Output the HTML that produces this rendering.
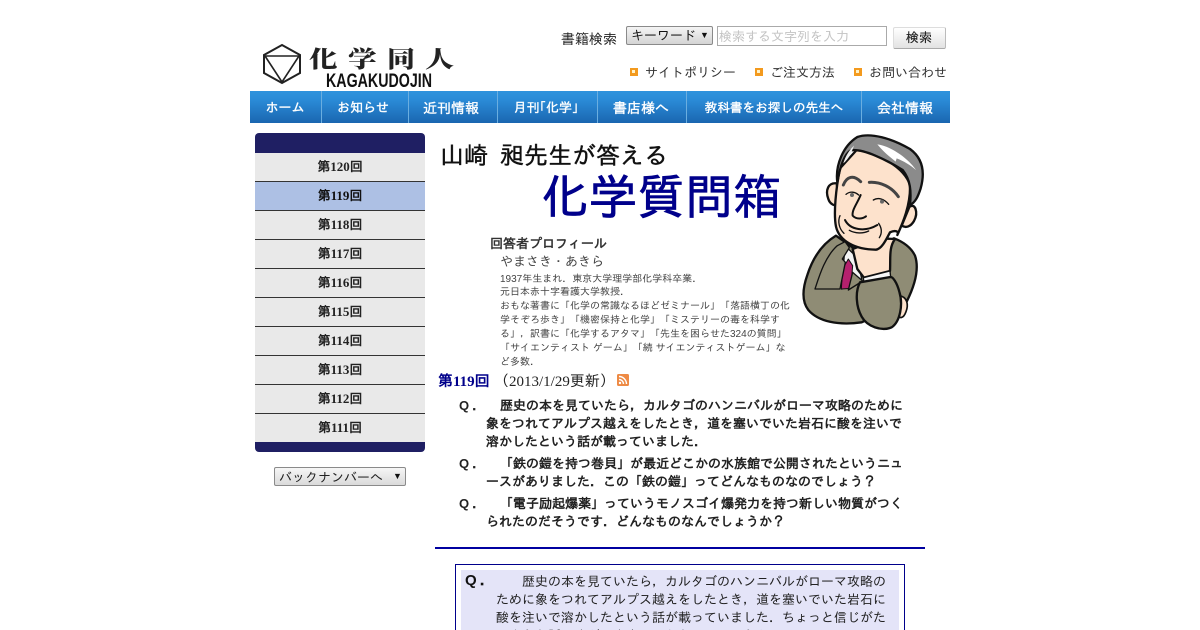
<!DOCTYPE html>
<html lang="ja">
<head>
<meta charset="utf-8">
<title>化学質問箱</title>
<style>
html,body{margin:0;padding:0;background:#fff;width:1200px;height:630px;overflow:hidden;}
#p{position:relative;width:1200px;height:630px;overflow:hidden;font-family:"Liberation Sans","IPAGothic","Noto Sans CJK JP",sans-serif;color:#222;}
.t{position:absolute;white-space:nowrap;line-height:18px;}
.b{position:absolute;}
.nav{position:absolute;left:250px;top:91px;width:700px;height:32px;background:linear-gradient(#2f93dd 0,#2a8ad6 30%,#1a66b0 100%);}
.nav i{position:absolute;top:0;width:1px;height:32px;background:#6aaee0;}
.nav span{position:absolute;top:8px;color:#fff;font-size:14px;line-height:18px;white-space:nowrap;transform:translateX(-50%);-webkit-text-stroke:.35px #fff;}
.side{position:absolute;left:255px;top:153px;width:170px;}
.side div{height:28px;border-bottom:1px solid #333;background:#e9e9e9;text-align:center;font:bold 13px/28px "Liberation Serif","IPAGothic","Noto Sans CJK JP",serif;color:#222;}
.side div:last-child{border-bottom:0;height:29px;}
.side .on{background:#adc0e4;color:#111;}
.ic{position:absolute;top:68px;width:8px;height:8px;background:#f39a1e;}
.ic:after{content:"";position:absolute;left:2px;top:2px;width:3px;height:3px;background:#fff2c8;}
.q{font-size:13px;font-weight:bold;color:#222;}
.q u{text-decoration:none;margin-left:3px;}
.s{font-size:10px;color:#444;line-height:14px;}
.a{font-size:13px;color:#222;}
</style>
</head>
<body>
<div id="p">

<!-- logo -->
<svg class="b" style="left:260px;top:40px" width="200" height="52" viewBox="0 0 200 52">
<g fill="none" stroke="#222" stroke-width="2">
<path d="M22 5 L40 15 L40 33 L22 43 L4 33 L4 15 Z"/>
<path d="M5 16 L39 16 L22 42 Z" stroke-width="1.6"/>
</g>
<g font-family="'Noto Serif CJK SC','IPAGothic',serif" font-weight="900" font-size="28" fill="#222">
<text transform="translate(49,27) scale(1.02,.82)">化</text>
<text transform="translate(88,27) scale(1.02,.82)">学</text>
<text transform="translate(127,27) scale(1,.82)">同</text>
<text transform="translate(165,27) scale(1.04,.82)">人</text>
</g>
<text x="66" y="47" font-family="'Liberation Sans',sans-serif" font-weight="bold" font-size="19" fill="#111" textLength="106" lengthAdjust="spacingAndGlyphs">KAGAKUDOJIN</text>
</svg>

<!-- search -->
<div class="t" style="left:561px;top:30px;font-size:14px;color:#222">書籍検索</div>
<div class="b" style="left:626px;top:26px;width:85px;height:17px;border:1px solid #8a8a8a;border-radius:2px;background:linear-gradient(#f4f4f4,#d4d4d4);"></div>
<div class="t" style="left:631px;top:27px;font-size:13px;color:#111">キーワード</div>
<div class="t" style="left:700px;top:26px;font-size:9px;color:#111">▼</div>
<div class="b" style="left:717px;top:26px;width:168px;height:18px;border:1px solid #aaa;background:#fff;"></div>
<div class="t" style="left:719px;top:28px;font-size:13px;color:#c4c4c4">検索する文字列を入力</div>
<div class="b" style="left:893px;top:27px;width:51px;height:20px;border:1px solid #ddd;border-bottom-color:#aaa;border-right-color:#bbb;border-radius:2px;background:linear-gradient(#fff,#e2e2e2);"></div>
<div class="t" style="left:906px;top:29px;font-size:13px;color:#222;-webkit-text-stroke:.15px #222">検索</div>

<!-- top links -->
<div class="ic" style="left:630px"></div>
<div class="t" style="left:645px;top:64px;font-size:13px;color:#333">サイトポリシー</div>
<div class="ic" style="left:755px"></div>
<div class="t" style="left:770px;top:64px;font-size:13px;color:#333">ご注文方法</div>
<div class="ic" style="left:854px"></div>
<div class="t" style="left:869px;top:64px;font-size:13px;color:#333">お問い合わせ</div>

<!-- nav -->
<div class="nav">
<i style="left:71px"></i><i style="left:158px"></i><i style="left:247px"></i><i style="left:347px"></i><i style="left:436px"></i><i style="left:611px"></i>
<span style="left:35px;font-size:13px">ホーム</span>
<span style="left:113px;font-size:13px">お知らせ</span>
<span style="left:201px">近刊情報</span>
<span style="left:296px;font-size:13px">月刊｢化学｣</span>
<span style="left:391px">書店様へ</span>
<span style="left:524px;font-size:12.6px">教科書をお探しの先生へ</span>
<span style="left:655px">会社情報</span>
</div>

<!-- sidebar -->
<div class="b" style="left:255px;top:133px;width:170px;height:20px;background:#1f1f63;border-radius:4px 4px 0 0;"></div>
<div class="side">
<div>第120回</div>
<div class="on">第119回</div>
<div>第118回</div>
<div>第117回</div>
<div>第116回</div>
<div>第115回</div>
<div>第114回</div>
<div>第113回</div>
<div>第112回</div>
<div>第111回</div>
</div>
<div class="b" style="left:255px;top:442px;width:170px;height:10px;background:#1f1f63;border-radius:0 0 4px 4px;"></div>
<div class="b" style="left:274px;top:467px;width:130px;height:17px;border:1px solid #8a8a8a;border-radius:2px;background:linear-gradient(#f6f6f6,#dadada);"></div>
<div class="t" style="left:279px;top:469px;font-size:13px;color:#222">バックナンバーへ</div>
<div class="t" style="left:393px;top:467px;font-size:9px;color:#111">▼</div>

<!-- title -->
<div class="t" style="left:440px;top:142px;font-size:24px;line-height:30px;color:#111;-webkit-text-stroke:.4px #111">山崎</div>
<div class="t" style="left:500px;top:142px;font-size:24px;line-height:30px;color:#111;-webkit-text-stroke:.4px #111">昶先生が答える</div>
<div class="t" style="left:541px;top:171px;font-size:48px;line-height:56px;color:#00008b;-webkit-text-stroke:.7px #00008b;">化学質問箱</div>

<!-- portrait -->
<svg class="b" style="left:780px;top:125px" width="160" height="215" viewBox="0 0 480 645">
<g stroke="#111" stroke-width="7" stroke-linejoin="round" stroke-linecap="round">
<!-- body -->
<path d="M168 332 C125 358 98 400 82 450 C66 495 66 530 85 555 C115 590 175 602 245 592 L380 530 C405 480 418 430 405 392 C392 365 368 350 342 340 L250 390 Z" fill="#8f8c75"/>
<!-- shirt, tie -->
<path d="M195 362 L232 398 L245 462 L185 492 Z" fill="#f4f4f4" stroke-width="4"/>
<path d="M205 402 L218 422 L212 490 L184 492 L188 432 Z" fill="#b5216e" stroke-width="3"/>
<!-- lapel -->
<path d="M172 362 L195 350 L208 368 L187 402 L196 412 L180 492 L105 492 C118 452 135 395 172 362 Z" fill="#8f8c75" stroke-width="4"/>
<path d="M218 442 L248 468 L205 495 Z" fill="#8f8c75" stroke-width="4"/>
<!-- fingers of lower hand -->
<path d="M358 512 C382 515 386 540 378 560 C370 582 360 580 350 572 Z" fill="#fde2cc" stroke-width="5"/>
<!-- hand/wrist under chin -->
<path d="M218 372 L232 432 L252 458 L330 438 C332 400 326 368 345 342 L300 340 Z" fill="#fde2cc"/>
<path d="M250 458 L330 438 L332 456 L252 476 Z" fill="#f7f7f7" stroke-width="4"/>
<!-- forearm -->
<path d="M240 472 C225 500 228 545 245 575 C262 605 305 620 335 607 C360 590 370 540 358 500 C350 470 338 456 332 456 Z" fill="#8f8c75"/>
<!-- ears -->
<path d="M170 175 C145 172 135 195 145 222 C150 238 165 245 178 240 Z" fill="#fde2cc"/>
<path d="M388 246 C405 232 416 262 402 288 C392 305 378 310 365 302 Z" fill="#fde2cc"/>
<!-- face -->
<path d="M180 130 C168 190 160 265 168 305 C178 348 225 374 288 374 C305 372 318 345 330 322 C345 315 358 318 352 330 C368 295 392 240 390 180 C370 120 280 80 230 75 Z" fill="#fde2cc"/>
<!-- hair -->
<path d="M172 172 C165 120 190 62 232 36 C272 22 335 40 390 72 C428 100 436 140 422 190 C414 215 406 232 390 240 C394 200 392 165 368 135 C320 105 250 70 212 76 C192 88 180 125 172 172 Z" fill="#8b8b8b"/>
</g>
<path d="M292 58 C330 62 385 100 408 135 C392 120 370 108 350 100 L347 110 C328 95 308 78 292 58 Z" fill="#fff"/>
<path d="M190 115 C197 92 208 75 222 62 C214 85 205 103 190 115 Z" fill="#eee"/>
<g fill="none" stroke="#111" stroke-linecap="round" stroke-linejoin="round">
<path d="M190 180 C200 155 220 148 242 170" stroke="#444" stroke-width="9"/>
<path d="M268 172 C300 170 335 185 355 215" stroke="#444" stroke-width="9"/>
<path d="M198 208 C210 198 225 200 236 210" stroke-width="4"/>
<path d="M280 225 C295 216 312 222 326 238" stroke-width="4"/>
<path d="M242 210 C232 235 215 255 218 272 C228 284 248 282 258 274" stroke-width="6"/>
<path d="M195 285 C210 315 255 322 292 300" stroke-width="6"/>
<path d="M208 316 C225 326 250 326 266 318" stroke-width="4"/>
<path d="M180 272 C172 290 178 312 192 325" stroke-width="4"/>
<path d="M296 295 C306 310 306 325 298 338" stroke-width="4"/>
</g>
<circle cx="216" cy="210" r="6" fill="#666"/><circle cx="306" cy="230" r="6" fill="#666"/>
</svg>

<!-- profile -->
<div class="t" style="left:490px;top:235px;font-size:13px;font-weight:bold;color:#333">回答者プロフィール</div>
<div class="t" style="left:500px;top:253px;font-size:13px;color:#444">やまさき・あきら</div>
<div class="t s" style="left:500px;top:273px">1937年生まれ．東京大学理学部化学科卒業．</div>
<div class="t s" style="left:500px;top:286px">元日本赤十字看護大学教授．</div>
<div class="t s" style="left:500px;top:300px">おもな著書に「化学の常識なるほどゼミナール」「落語横丁の化</div>
<div class="t s" style="left:500px;top:314px">学そぞろ歩き」「機密保持と化学」「ミステリーの毒を科学す</div>
<div class="t s" style="left:500px;top:328px">る」，訳書に「化学するアタマ」「先生を困らせた324の質問」</div>
<div class="t s" style="left:500px;top:342px">「サイエンティスト ゲーム」「続 サイエンティストゲーム」な</div>
<div class="t s" style="left:500px;top:356px">ど多数．</div>

<!-- heading -->
<div class="t" style="left:438px;top:373px;font:bold 15px/18px 'Liberation Serif','IPAGothic','Noto Sans CJK JP',serif;color:#00008b">第119回</div>
<div class="t" style="left:494px;top:373px;font:15px/18px 'Liberation Serif','IPAGothic','Noto Sans CJK JP',serif;color:#222">（2013/1/29更新）</div>
<svg class="b" style="left:617px;top:374px" width="12" height="12" viewBox="0 0 12 12">
<rect width="12" height="12" rx="1.5" fill="#ee8a44"/>
<circle cx="3" cy="9" r="1.2" fill="#fff"/>
<path d="M2 5.5 A4.5 4.5 0 0 1 6.5 10 M2 2.5 A7.5 7.5 0 0 1 9.5 10" fill="none" stroke="#fff" stroke-width="1.4"/>
</svg>

<!-- questions -->
<div class="t q" style="left:459px;top:397px">Q<u>．</u></div>
<div class="t q" style="left:500px;top:397px">歴史の本を見ていたら，カルタゴのハンニバルがローマ攻略のために</div>
<div class="t q" style="left:486px;top:415px">象をつれてアルプス越えをしたとき，道を塞いでいた岩石に酸を注いで</div>
<div class="t q" style="left:486px;top:433px">溶かしたという話が載っていました．</div>
<div class="t q" style="left:459px;top:455px">Q<u>．</u></div>
<div class="t q" style="left:500px;top:455px">「鉄の鎧を持つ巻貝」が最近どこかの水族館で公開されたというニュ</div>
<div class="t q" style="left:486px;top:473px">ースがありました．この「鉄の鎧」ってどんなものなのでしょう？</div>
<div class="t q" style="left:459px;top:495px">Q<u>．</u></div>
<div class="t q" style="left:500px;top:495px">「電子励起爆薬」っていうモノスゴイ爆発力を持つ新しい物質がつく</div>
<div class="t q" style="left:486px;top:513px">られたのだそうです．どんなものなんでしょうか？</div>

<div class="b" style="left:435px;top:547px;width:490px;height:2px;background:#0000a0"></div>

<!-- answer box -->
<div class="b" style="left:455px;top:564px;width:448px;height:90px;border:1px solid #00008b"></div>
<div class="b" style="left:461px;top:570px;width:438px;height:70px;background:#e4e4f8"></div>
<div class="t" style="left:465px;top:572px;font-size:15px;font-weight:bold;color:#111">Q<span style="margin-left:3px">．</span></div>
<div class="t a" style="left:522px;top:573px">歴史の本を見ていたら，カルタゴのハンニバルがローマ攻略の</div>
<div class="t a" style="left:496px;top:591px">ために象をつれてアルプス越えをしたとき，道を塞いでいた岩石に</div>
<div class="t a" style="left:496px;top:609px">酸を注いで溶かしたという話が載っていました．ちょっと信じがた</div>
<div class="t a" style="left:496px;top:627px">いような話ですが，本当のことなのでしょうか．</div>

</div>
</body>
</html>
